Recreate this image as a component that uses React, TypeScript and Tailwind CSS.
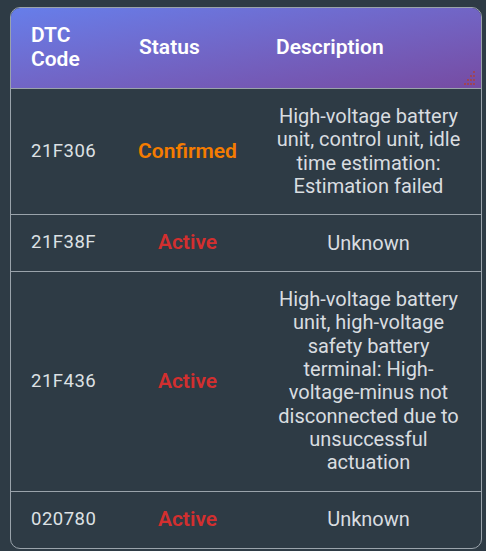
import React from "react";

interface DtcRow {
  code: string;
  status: "Confirmed" | "Active";
  description: string;
}

const rows: DtcRow[] = [
  {
    code: "21F306",
    status: "Confirmed",
    description:
      "High-voltage battery unit, control unit, idle time estimation: Estimation failed",
  },
  { code: "21F38F", status: "Active", description: "Unknown" },
  {
    code: "21F436",
    status: "Active",
    description:
      "High-voltage battery unit, high-voltage safety battery terminal: High-voltage-minus not disconnected due to unsuccessful actuation",
  },
  { code: "020780", status: "Active", description: "Unknown" },
];

const statusColor = {
  Confirmed: "text-[#f57c00]",
  Active: "text-[#d32f2f]",
};

// little resize grip dots in the header corner
const gripDots = [
  [15, 2], [12, 6], [15, 6], [9, 10], [12, 10], [15, 10], [6, 14], [9, 14], [12, 14], [15, 14],
];

export default function App() {
  return (
    <div
      className="min-h-[551px] bg-[#2e3b45] pt-[7px] pl-[10px] pr-[4px]"
      style={{ fontFamily: "Roboto, 'Noto Sans', sans-serif" }}
    >
      <div className="relative overflow-hidden rounded-[10px] border border-[#9aa3ab]">
        <table className="w-full border-collapse">
          <thead>
            <tr className="bg-gradient-to-br from-[#667eea] to-[#764ba2] text-white">
              <th className="w-[108px] px-[20px] pt-[16px] pb-[17px] text-left text-[21px] leading-[23.5px] font-semibold">
                DTC Code
              </th>
              <th className="w-[137px] px-[20px] pt-[16px] pb-[17px] text-left text-[21px] leading-[23.5px] font-semibold">
                Status
              </th>
              <th className="px-[20px] pt-[16px] pb-[17px] text-left text-[21px] leading-[23.5px] font-semibold">
                Description
              </th>
            </tr>
          </thead>
          <tbody>
            {rows.map((row) => (
              <tr key={row.code} className="border-t border-[#9aa3ab]">
                <td className="px-[20px] py-[16px] text-left text-[18.5px] leading-[23.4px] tracking-[0.5px] text-[#dde1e4]">
                  {row.code}
                </td>
                <td
                  className={`px-[4px] py-[16px] text-center text-[21px] leading-[23.4px] font-semibold ${statusColor[row.status]}`}
                >
                  {row.status}
                </td>
                <td className="h-[57px] px-[18px] py-[16px] text-center text-[20px] leading-[23.3px] text-[#d9dde0]">
                  {row.description}
                </td>
              </tr>
            ))}
          </tbody>
        </table>
        <svg
          className="absolute right-[2px] top-[62px]"
          width="20"
          height="18"
          viewBox="0 0 20 18"
        >
          {gripDots.map(([x, y], i) => (
            <circle key={i} cx={x} cy={y} r="0.9" fill="#b5402f" />
          ))}
        </svg>
      </div>
    </div>
  );
}
